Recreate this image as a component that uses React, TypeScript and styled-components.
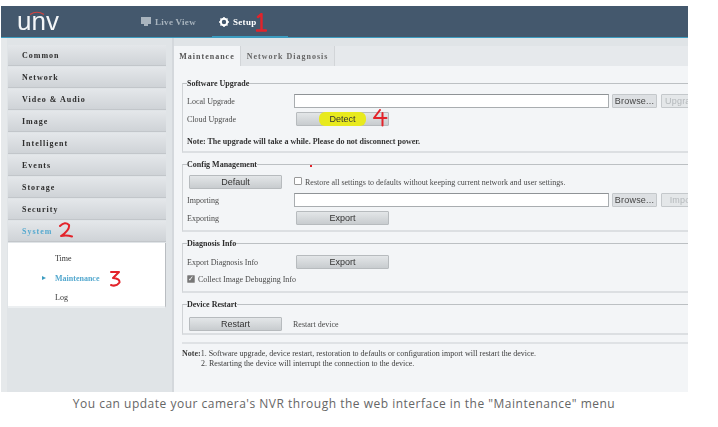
import React from "react";
import styled, { createGlobalStyle } from "styled-components";

const GlobalStyle = createGlobalStyle`
  html, body {
    margin: 0;
    padding: 0;
    background: #fff;
  }
  body {
    width: 718px;
    height: 427px;
    overflow: hidden;
  }
`;

const Page = styled.div`
  width: 718px;
  height: 427px;
  padding-top: 6px;
  box-sizing: border-box;
  overflow: hidden;
`;

const Frame = styled.div`
  position: relative;
  width: 687px;
  height: 386px;
  margin-left: 1px;
  overflow: hidden;
  filter: blur(0.35px);
  font-family: "Liberation Serif", serif;
  color: #333;
`;

const Header = styled.header`
  display: flex;
  align-items: stretch;
  height: 31px;
  background: #44586d;
  border-bottom: 1px solid #3c9cc0;
  box-sizing: content-box;
`;

const Logo = styled.div`
  position: relative;
  width: 140px;
  padding: 2px 0 0 16px;
  box-sizing: border-box;
  font-family: "Liberation Sans", sans-serif;
  font-size: 26px;
  line-height: 26px;
  color: #f4f6f8;
`;

const LogoArc = styled.svg`
  position: absolute;
  left: 28px;
  top: 5px;
`;

const NavItem = styled.div<{ $active?: boolean }>`
  display: flex;
  align-items: center;
  gap: 4px;
  width: ${(p) => (p.$active ? "76px" : "71px")};
  padding-left: ${(p) => (p.$active ? "7px" : "0")};
  box-sizing: border-box;
  font-size: 9px;
  font-weight: bold;
  letter-spacing: 0.3px;
  color: ${(p) => (p.$active ? "#fff" : "#a9b4be")};
  box-shadow: ${(p) => (p.$active ? "inset 0 -1px 0 #3c9cc0" : "none")};
`;

const Body = styled.div`
  display: flex;
  height: 354px;
  background: #e0e4e7;
`;

const Sidebar = styled.aside`
  width: 173px;
  padding: 7px 6px 0 1px;
  box-sizing: border-box;
  border-right: 2px solid #d4d8dc;
  border-left: 6px solid #e6e9eb;
`;

const MenuItem = styled.div<{ $active?: boolean }>`
  display: flex;
  align-items: center;
  height: 21px;
  margin-bottom: 1px;
  padding-left: 14px;
  font-size: 8px;
  font-weight: bold;
  letter-spacing: 1px;
  color: ${(p) => (p.$active ? "#55a9cf" : "#2d2d2d")};
  background: linear-gradient(#e4e7ea, #cfd3d7);
  border-bottom: 1px solid #c2c6ca;
  box-sizing: border-box;
`;

const SubMenu = styled.div`
  height: 65px;
  padding-top: 6px;
  box-sizing: border-box;
  background: #fff;
  border-right: 1px solid #b9bdc1;
  border-bottom: 2px solid #eceff1;
`;

const SubItem = styled.div<{ $active?: boolean }>`
  position: relative;
  height: 19.5px;
  line-height: 19.5px;
  padding-left: 47px;
  font-size: 8px;
  font-weight: ${(p) => (p.$active ? "bold" : "normal")};
  color: ${(p) => (p.$active ? "#55a9cf" : "#333")};
`;

const SubArrow = styled.span`
  position: absolute;
  left: 34px;
  top: 7px;
  border-left: 4px solid #3c9cc0;
  border-top: 2.5px solid transparent;
  border-bottom: 2.5px solid transparent;
`;

const Main = styled.main`
  flex: 1;
  min-width: 0;
  padding-top: 8px;
  overflow: hidden;
`;

const Tabs = styled.div`
  display: flex;
  height: 20px;
  background: #e6e9ec;
`;

const Tab = styled.div<{ $active?: boolean }>`
  display: flex;
  align-items: center;
  justify-content: center;
  width: ${(p) => (p.$active ? "67px" : "94px")};
  font-size: 8px;
  font-weight: bold;
  letter-spacing: 1px;
  color: ${(p) => (p.$active ? "#555" : "#666")};
  background: ${(p) => (p.$active ? "#f3f5f7" : "#e2e5e8")};
  border-right: 1px solid #d2d5d8;
  box-sizing: border-box;
`;

const Panel = styled.div`
  width: 540px;
  height: 326px;
  padding: 13px 0 0 8px;
  box-sizing: border-box;
  background: #f3f5f7;
`;

const Group = styled.fieldset<{ $height: number }>`
  width: 560px;
  height: ${(p) => p.$height}px;
  margin: 0 0 7px 0;
  padding: 0 0 0 4px;
  box-sizing: border-box;
  border: 1px solid #bcc0c3;
  border-bottom: 2px solid #dcdfe2;
  border-left: 1px solid #d0d3d6;
  border-right: none;
`;

const Legend = styled.legend`
  margin-left: 0;
  padding: 0;
  font-size: 8px;
  line-height: 9px;
  font-weight: bold;
  color: #2c2c2c;
`;

const Row = styled.div<{ $top?: number }>`
  display: flex;
  align-items: center;
  height: 14px;
  margin-top: ${(p) => p.$top ?? 4}px;
`;

const Label = styled.span`
  flex: none;
  width: 107px;
  font-size: 8px;
  color: #4a4a4a;
`;

const FileInput = styled.div`
  flex: none;
  width: 315px;
  height: 14px;
  box-sizing: border-box;
  background: #fff;
  border: 1px solid #a9adb0;
  border-top-color: #8f9396;
`;

const Button = styled.div<{ $left?: number }>`
  display: flex;
  flex: none;
  align-items: center;
  justify-content: center;
  width: 93px;
  height: 14px;
  margin-left: ${(p) => p.$left ?? 2}px;
  box-sizing: border-box;
  font-family: "Liberation Sans", sans-serif;
  font-size: 9px;
  color: #333;
  background: linear-gradient(#e3e6e8, #c8cccf);
  border: 1px solid #b7bbbe;
  border-radius: 1px;
`;

const Browse = styled.div`
  display: flex;
  flex: none;
  align-items: center;
  justify-content: center;
  width: 45px;
  height: 14px;
  margin-left: 3px;
  box-sizing: border-box;
  font-family: "Liberation Sans", sans-serif;
  font-size: 9px;
  letter-spacing: 0.2px;
  color: #444;
  background: #dde0e3;
  border: 1px solid #c4c8cb;
  border-radius: 1px;
`;

const Disabled = styled(Browse)`
  width: 44px;
  margin-left: 4px;
  color: #b4b8bb;
  background: #e4e7e9;
  overflow: hidden;
  white-space: nowrap;
`;

const Highlight = styled.span`
  padding: 2px 10px;
  background: #e8ea1e;
  border-radius: 6px;
`;

const NoteLine = styled.div`
  margin-top: 11px;
  font-size: 8px;
  line-height: 10px;
  font-weight: bold;
  color: #333;
`;

const Box = styled.span<{ $checked?: boolean }>`
  display: inline-flex;
  flex: none;
  align-items: center;
  justify-content: center;
  width: 8px;
  height: 8px;
  margin-right: 3px;
  box-sizing: border-box;
  font-family: "DejaVu Sans", sans-serif;
  font-size: 7px;
  color: #fff;
  background: ${(p) => (p.$checked ? "#777" : "#fff")};
  border: 1px solid #999;
  border-radius: 1px;
`;

const Plain = styled.span<{ $left?: number }>`
  margin-left: ${(p) => p.$left ?? 0}px;
  font-size: 8px;
  color: #4a4a4a;
  white-space: nowrap;
`;

const Notes = styled.div`
  width: 540px;
  margin-top: 0;
  padding-top: 5px;
  border-top: 2px solid #dfe2e5;
  font-size: 8px;
  line-height: 9.5px;
  color: #3c3c3c;
`;

const NoteIndent = styled.div`
  padding-left: 19px;
`;

const Scribble = styled.svg`
  position: absolute;
  fill: none;
  stroke: #e3232a;
  stroke-linecap: round;
  stroke-linejoin: round;
`;

const RedDot = styled.span`
  position: absolute;
  left: 309px;
  top: 159px;
  width: 2px;
  height: 2px;
  background: #e3232a;
`;

const Caption = styled.p`
  margin: 5px 0 0;
  text-align: center;
  width: 688px;
  font-family: "Open Sans", sans-serif;
  font-size: 12px;
  line-height: 14px;
  letter-spacing: 0.5px;
  color: #666;
`;

const menu = ["Common", "Network", "Video & Audio", "Image", "Intelligent", "Events", "Storage", "Security"];

export default function App() {
  return (
    <>
      <GlobalStyle />
      <Page>
        <Frame>
          <Header>
            <Logo>
              <LogoArc width="16" height="4" viewBox="0 0 16 4">
                <path d="M1 3.5 Q8 -1 15 3.5" stroke="#d8433f" strokeWidth="1.1" fill="none" />
              </LogoArc>
              unv
            </Logo>
            <NavItem>
              <svg width="10" height="9" viewBox="0 0 10 9">
                <rect x="0" y="0" width="10" height="7" fill="#a9b4be" />
                <rect x="3" y="7" width="4" height="2" fill="#a9b4be" />
              </svg>
              Live View
            </NavItem>
            <NavItem $active>
              <svg width="10" height="10" viewBox="0 0 10 10">
                <circle cx="5" cy="5" r="3.2" fill="none" stroke="#fff" strokeWidth="2" />
                <path d="M5 0v2M5 8v2M0 5h2M8 5h2M1.5 1.5l1.4 1.4M7.1 7.1l1.4 1.4M8.5 1.5 7.1 2.9M2.9 7.1 1.5 8.5" stroke="#fff" strokeWidth="1.4" />
              </svg>
              Setup
            </NavItem>
          </Header>
          <Body>
            <Sidebar>
              {menu.map((m) => (
                <MenuItem key={m}>{m}</MenuItem>
              ))}
              <MenuItem $active>System</MenuItem>
              <SubMenu>
                <SubItem>Time</SubItem>
                <SubItem $active>
                  <SubArrow />
                  Maintenance
                </SubItem>
                <SubItem>Log</SubItem>
              </SubMenu>
            </Sidebar>
            <Main>
              <Tabs>
                <Tab $active>Maintenance</Tab>
                <Tab>Network Diagnosis</Tab>
              </Tabs>
              <Panel>
                <Group $height={74}>
                  <Legend>Software Upgrade</Legend>
                  <Row $top={6}>
                    <Label>Local Upgrade</Label>
                    <FileInput />
                    <Browse>Browse...</Browse>
                    <Disabled>Upgrade</Disabled>
                  </Row>
                  <Row>
                    <Label>Cloud Upgrade</Label>
                    <Button>
                      <Highlight>Detect</Highlight>
                    </Button>
                  </Row>
                  <NoteLine>Note: The upgrade will take a while. Please do not disconnect power.</NoteLine>
                </Group>
                <Group $height={72}>
                  <Legend>Config Management</Legend>
                  <Row $top={6}>
                    <Button>Default</Button>
                    <Plain $left={12}>
                      <Box />
                    </Plain>
                    <Plain>Restore all settings to defaults without keeping current network and user settings.</Plain>
                  </Row>
                  <Row>
                    <Label>Importing</Label>
                    <FileInput />
                    <Browse>Browse...</Browse>
                    <Disabled>Import</Disabled>
                  </Row>
                  <Row>
                    <Label>Exporting</Label>
                    <Button>Export</Button>
                  </Row>
                </Group>
                <Group $height={54}>
                  <Legend>Diagnosis Info</Legend>
                  <Row $top={7}>
                    <Label>Export Diagnosis Info</Label>
                    <Button>Export</Button>
                  </Row>
                  <Row $top={3}>
                    <Box $checked>✓</Box>
                    <Plain>Collect Image Debugging Info</Plain>
                  </Row>
                </Group>
                <Group $height={35}>
                  <Legend>Device Restart</Legend>
                  <Row $top={8}>
                    <Button>Restart</Button>
                    <Plain $left={11}>Restart device</Plain>
                  </Row>
                </Group>
                <Notes>
                  <div>
                    <b>Note:</b>1. Software upgrade, device restart, restoration to defaults or configuration import will restart the device.
                  </div>
                  <NoteIndent>2. Restarting the device will interrupt the connection to the device.</NoteIndent>
                </Notes>
              </Panel>
            </Main>
          </Body>
          <Scribble width="12" height="19" viewBox="0 0 12 19" style={{ left: 254, top: 7 }}>
            <path d="M3 4 L6.5 1 L6.5 17 M2 17.5 H11" strokeWidth="2.4" />
          </Scribble>
          <Scribble width="16" height="17" viewBox="0 0 16 17" style={{ left: 57, top: 216 }}>
            <path d="M2 4 Q7 -1 11 3 Q12 8 3 14 Q9 13 14 14.5" strokeWidth="2" />
          </Scribble>
          <Scribble width="12" height="18" viewBox="0 0 12 18" style={{ left: 108, top: 264 }}>
            <path d="M2 2 H10 L4 8 Q11 8.5 10.5 12.5 Q7 17 2 15" strokeWidth="2" />
          </Scribble>
          <Scribble width="16" height="18" viewBox="0 0 16 18" style={{ left: 371, top: 103 }}>
            <path d="M8 1 L2 9 H14.5 M10.5 4 V16.5" strokeWidth="2" />
          </Scribble>
          <RedDot />
        </Frame>
        <Caption>You can update your camera's NVR through the web interface in the "Maintenance" menu</Caption>
      </Page>
    </>
  );
}
